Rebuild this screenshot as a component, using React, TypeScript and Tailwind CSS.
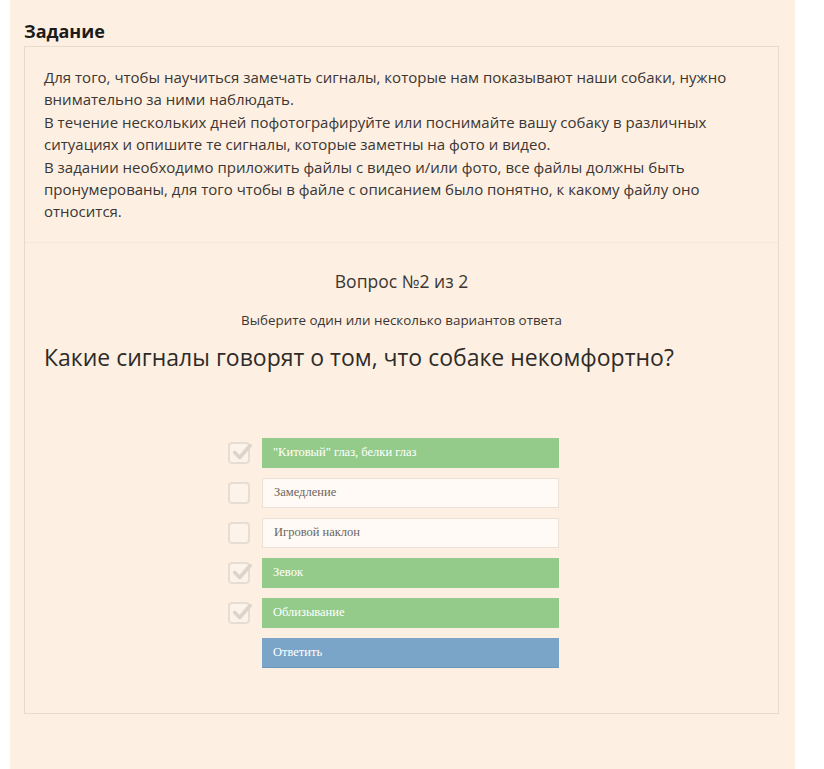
const options = [
  { text: '"Китовый" глаз, белки глаз', checked: true },
  { text: 'Замедление', checked: false },
  { text: 'Игровой наклон', checked: false },
  { text: 'Зевок', checked: true },
  { text: 'Облизывание', checked: true },
]

function CheckBox({ checked }: { checked: boolean }) {
  return (
    <div className="relative w-[22px] h-[22px] rounded-[4px] border-2 border-[#e6ddd4] bg-[#fdf3e9]">
      {checked && (
        <svg viewBox="0 0 24 24" className="absolute left-[1px] top-[-3px] w-[22px] h-[22px]">
          <path d="M4 12.5 L9.5 18 L21 5" fill="none" stroke="#dcd5ce" strokeWidth="4" strokeLinecap="round" strokeLinejoin="round" />
        </svg>
      )}
    </div>
  )
}

export default function App() {
  return (
    <div className="min-h-[769px] w-full bg-white" style={{ fontFamily: '"Open Sans", sans-serif' }}>
      <div className="ml-[10px] w-[785px] min-h-[769px] bg-[#fdf0e3] pl-[14px] pr-[16px] pt-[20px] text-[#3b3632]">
        <h2 className="text-[18px] font-bold leading-[22px] text-[#1d1b19]">Задание</h2>
        <div className="mt-[4px] border border-[#e7dbcf]">
          <div className="border-b border-[#f6e7d9] px-[19px] pt-[19px] pb-[19px] text-[15px] leading-[22.4px]">
            <p>Для того, чтобы научиться замечать сигналы, которые нам показывают наши собаки, нужно внимательно за ними наблюдать.</p>
            <p>В течение нескольких дней пофотографируйте или поснимайте вашу собаку в различных ситуациях и опишите те сигналы, которые заметны на фото и видео.</p>
            <p>В задании необходимо приложить файлы с видео и/или фото, все файлы должны быть пронумерованы, для того чтобы в файле с описанием было понятно, к какому файлу оно относится.</p>
          </div>
          <div className="px-[19px] pt-[27px] pb-[45px]">
            <div className="text-center text-[17.5px] leading-[22px]">Вопрос №2 из 2</div>
            <div className="mt-[19px] text-center text-[13.4px] leading-[18px]">Выберите один или несколько вариантов ответа</div>
            <div className="mt-[13px] text-[23px] leading-[30px] text-[#2f2b28]">Какие сигналы говорят о том, что собаке некомфортно?</div>
            <div className="mt-[66px] pr-[16px] flex flex-col items-center gap-[10px]" style={{ fontFamily: '"Liberation Serif", serif' }}>
              {options.map((o) => (
                <div key={o.text} className="flex items-center gap-[12px]">
                  <CheckBox checked={o.checked} />
                  <div
                    className={
                      o.checked
                        ? 'w-[297px] h-[30px] flex items-center px-[11px] text-[12.5px] text-white bg-[#95cb8a]'
                        : 'w-[297px] h-[30px] flex items-center px-[11px] text-[12.5px] text-[#6b6560] bg-[#fffaf5] border border-[#ece1d6]'
                    }
                  >
                    {o.text}
                  </div>
                </div>
              ))}
              <div className="flex items-center gap-[12px]">
                <div className="w-[22px]" />
                <button className="w-[297px] h-[30px] flex items-center px-[11px] text-[12.5px] text-white bg-[#7ba5c8] border-b border-[#6d97bb]">
                  Ответить
                </button>
              </div>
            </div>
          </div>
        </div>
      </div>
    </div>
  )
}
